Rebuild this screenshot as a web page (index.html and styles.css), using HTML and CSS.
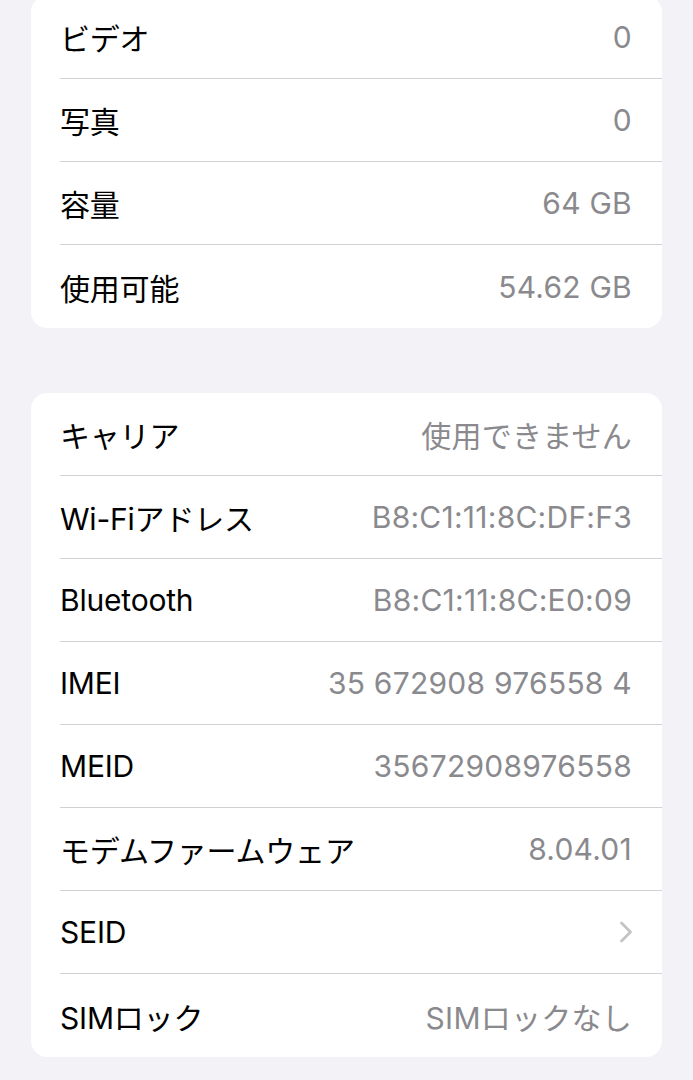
FILE: index.html
```html
<!DOCTYPE html>
<html lang="ja">
<head>
<meta charset="utf-8">
<link rel="stylesheet" href="styles.css">
</head>
<body>
<div class="page">
  <div class="card first">
    <div class="row"><span class="label">ビデオ</span><span class="value">0</span></div>
    <div class="row"><span class="label">写真</span><span class="value">0</span></div>
    <div class="row"><span class="label">容量</span><span class="value">64 GB</span></div>
    <div class="row"><span class="label">使用可能</span><span class="value">54.62 GB</span></div>
  </div>
  <div class="card">
    <div class="row"><span class="label">キャリア</span><span class="value">使用できません</span></div>
    <div class="row"><span class="label">Wi-Fiアドレス</span><span class="value">B8:C1:11:8C:DF:F3</span></div>
    <div class="row"><span class="label">Bluetooth</span><span class="value">B8:C1:11:8C:E0:09</span></div>
    <div class="row"><span class="label">IMEI</span><span class="value">35 672908 976558 4</span></div>
    <div class="row"><span class="label">MEID</span><span class="value">35672908976558</span></div>
    <div class="row"><span class="label">モデムファームウェア</span><span class="value">8.04.01</span></div>
    <div class="row"><span class="label">SEID</span><svg class="chev" width="16" height="24" viewBox="0 0 16 24"><path d="M3.5 3 L12.5 12 L3.5 21" fill="none" stroke="#c4c4c7" stroke-width="2.8" stroke-linecap="round" stroke-linejoin="round"/></svg></div>
    <div class="row"><span class="label">SIMロック</span><span class="value">SIMロックなし</span></div>
  </div>
</div>
</body>
</html>
```
FILE: styles.css
```css
html, body {
  margin: 0;
  padding: 0;
  background: #f2f2f7;
}
body {
  font-family: Inter, "Noto Sans CJK JP", sans-serif;
  font-size: 30px;
  -webkit-font-smoothing: antialiased;
}
.page {
  display: flex;
  flex-direction: column;
  gap: 65px;
  padding: 0 31px;
  margin-top: -4px;
}
.card {
  background: #fff;
  border-radius: 16px;
  overflow: hidden;
}
.row {
  display: flex;
  align-items: center;
  justify-content: space-between;
  height: 82px;
  margin-left: 29px;
  padding-right: 30px;
  border-bottom: 1px solid #d1d1d5;
}
.row:last-child {
  border-bottom: none;
  height: 83px;
}
.label {
  color: #000;
  letter-spacing: -0.2px;
}
.value {
  color: #8a8a8e;
  letter-spacing: 0.25px;
}
.chev {
  display: block;
  margin-right: -2px;
}
```
